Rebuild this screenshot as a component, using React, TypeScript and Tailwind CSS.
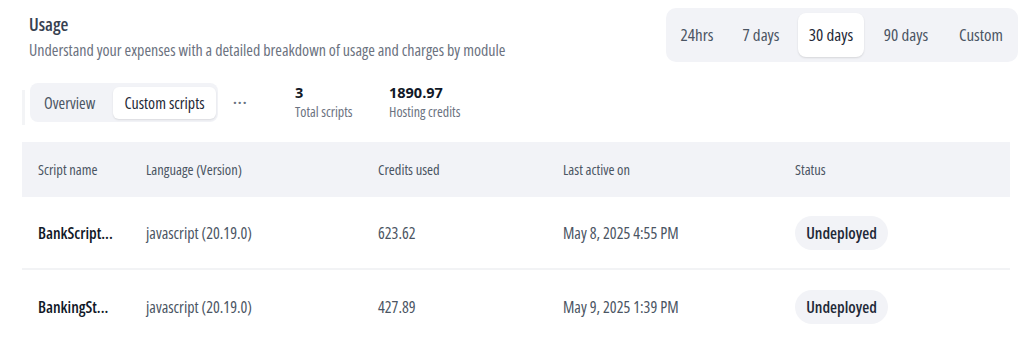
import React from 'react';

const ranges = [
  { label: '24hrs', w: 'w-[54px]' },
  { label: '7 days', w: 'w-[70px]' },
  { label: '30 days', w: 'w-[66px]' },
  { label: '90 days', w: 'w-[80px]' },
  { label: 'Custom', w: 'w-[66px]' },
];

const rows = [
  {
    name: 'BankScript...',
    lang: 'javascript (20.19.0)',
    credits: '623.62',
    active: 'May 8, 2025 4:55 PM',
  },
  {
    name: 'BankingSt...',
    lang: 'javascript (20.19.0)',
    credits: '427.89',
    active: 'May 9, 2025 1:39 PM',
  },
];

const cols = 'grid grid-cols-[108px_232px_185px_232px_1fr] items-center pl-4';

export default function App() {
  return (
    <div className="h-[344px] w-[1034px] overflow-hidden bg-white font-['Open_Sans',sans-serif] font-stretch-condensed text-[#374151]">
      <div className="flex items-start justify-between pl-[29px] pr-4 pt-2">
        <div className="pt-[5px]">
          <h1 className="text-[18px] font-semibold leading-[22px] text-[#374151]">Usage</h1>
          <p className="mt-[5px] text-[16px] leading-5 text-[#6b7280]">
            Understand your expenses with a detailed breakdown of usage and charges by module
          </p>
        </div>
        <div className="flex h-[54px] items-center gap-[2px] rounded-[10px] bg-[#f2f3f7] px-[4px]">
          {ranges.map((r) => (
            <button
              key={r.label}
              className={
                r.label === '30 days'
                  ? `${r.w} h-[44px] rounded-[8px] bg-white text-[17px] text-[#1f2937] shadow-[0_1px_2px_rgba(0,0,0,0.12)]`
                  : `${r.w} h-[44px] text-[17px] text-[#4b5563]`
              }
            >
              {r.label}
            </button>
          ))}
        </div>
      </div>

      <div className="mt-[21px] flex items-start pl-[22px]">
        <div className="mt-[7px] h-[35px] w-[3px] bg-[#f3f4f6]" />
        <div className="ml-[5px] flex h-[39px] w-[188px] items-center justify-between rounded-[8px] bg-[#f2f3f7] pl-[14px] pr-[2px]">
          <span className="text-[16px] text-[#4b5563]">Overview</span>
          <button className="h-[32px] w-[103px] rounded-[6px] bg-white text-[16px] text-[#1f2937] shadow-[0_1px_2px_rgba(0,0,0,0.1)]">
            Custom scripts
          </button>
        </div>
        <span className="ml-[15px] mt-[8px] w-[62px] text-[15px] font-bold tracking-[1px] text-[#6b7280]">···</span>
        <div className="mt-[2px] flex w-[94px] flex-col">
          <span className="text-[14.5px] font-bold leading-4 font-stretch-normal text-[#111827]">3</span>
          <span className="mt-[3px] text-[14px] leading-4 text-[#6b7280]">Total scripts</span>
        </div>
        <div className="mt-[2px] flex flex-col">
          <span className="text-[14.5px] font-bold leading-4 font-stretch-normal text-[#111827]">1890.97</span>
          <span className="mt-[3px] text-[14px] leading-4 text-[#6b7280]">Hosting credits</span>
        </div>
      </div>

      <div className="ml-[22px] mt-[17px] w-[988px]">
        <div className={`${cols} h-[55px] bg-[#f2f3f7] text-[14.5px] text-[#4b5563]`}>
          <span>Script name</span>
          <span>Language (Version)</span>
          <span>Credits used</span>
          <span>Last active on</span>
          <span>Status</span>
        </div>
        {rows.map((r, i) => (
          <div
            key={r.name}
            className={`${cols} h-[73px] text-[16px] text-[#4b5563] ${i === 0 ? 'border-b-2 border-[#f2f3f5]' : ''}`}
          >
            <span className="font-semibold text-[#111827]">{r.name}</span>
            <span>{r.lang}</span>
            <span>{r.credits}</span>
            <span>{r.active}</span>
            <span>
              <span className="inline-flex h-[34px] w-[93px] items-center justify-center rounded-full bg-[#f2f3f7] font-semibold text-[#1f2937]">
                Undeployed
              </span>
            </span>
          </div>
        ))}
      </div>
    </div>
  );
}
